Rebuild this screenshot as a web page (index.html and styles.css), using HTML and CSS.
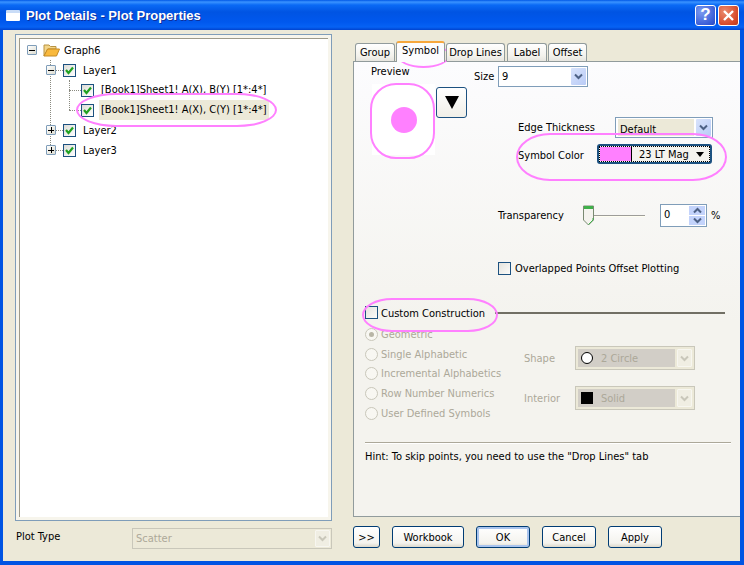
FILE: index.html
```html
<!DOCTYPE html>
<html lang="en">
<head>
    <meta charset="UTF-8">
    <title>Plot Details - Plot Properties</title>
    <link rel="stylesheet" href="styles.css">
</head>
<body>
    <svg class="defs" width="0" height="0">
        <symbol id="tick" viewBox="0 0 11 11">
            <path d="M2 5 L4.5 8 L9 2.5" fill="none" stroke="#21a121" stroke-width="2.2"/>
        </symbol>
        <symbol id="chevron" viewBox="0 0 9 7">
            <path d="M1 1.5 L4.5 5 L8 1.5" fill="none" stroke="currentColor" stroke-width="2"/>
        </symbol>
    </svg>

    <div class="window">
        <div class="titlebar">
            <span class="title-icon"></span>
            <span class="title-text">Plot Details - Plot Properties</span>
            <span class="caption-btn help-btn">?</span>
            <span class="caption-btn close-btn">
                <svg width="13" height="13" viewBox="0 0 13 13"><path d="M2 2 L11 11 M11 2 L2 11" stroke="#fff" stroke-width="2.4"/></svg>
            </span>
        </div>

        <div class="client">
            <div class="left-col">
                <div class="tree-frame">
                    <div class="tree">
                        <div class="row level0">
                            <span class="expander minus"></span>
                            <svg class="folder" width="17" height="14" viewBox="0 0 17 14">
                                <path d="M1 13 V2 H6 L7.5 3.5 H13 V6 H5 Z" fill="#f3d58a" stroke="#b89343"/>
                                <path d="M1 13 L4.5 6 H16.5 L13.5 13 Z" fill="#f9b93d" stroke="#c48a25"/>
                            </svg>
                            <span class="row-text">Graph6</span>
                        </div>
                        <div class="layer-group">
                            <div class="row level1">
                                <span class="expander minus"></span>
                                <span class="dots short"></span>
                                <span class="check"><svg width="11" height="11"><use href="#tick"/></svg></span>
                                <span class="row-text">Layer1</span>
                            </div>
                            <div class="plot-group">
                                <div class="row level2">
                                    <span class="dots long"></span>
                                    <span class="check"><svg width="11" height="11"><use href="#tick"/></svg></span>
                                    <span class="row-text">[Book1]Sheet1! A(X), B(Y) [1*:4*]</span>
                                </div>
                                <div class="row level2">
                                    <span class="dots long"></span>
                                    <span class="check"><svg width="11" height="11"><use href="#tick"/></svg></span>
                                    <span class="row-text selected">[Book1]Sheet1! A(X), C(Y) [1*:4*]</span>
                                </div>
                            </div>
                            <div class="row level1">
                                <span class="expander plus"></span>
                                <span class="dots short"></span>
                                <span class="check"><svg width="11" height="11"><use href="#tick"/></svg></span>
                                <span class="row-text">Layer2</span>
                            </div>
                            <div class="row level1">
                                <span class="expander plus"></span>
                                <span class="dots short"></span>
                                <span class="check"><svg width="11" height="11"><use href="#tick"/></svg></span>
                                <span class="row-text">Layer3</span>
                            </div>
                        </div>
                    </div>
                </div>
                <div class="plot-type">
                    <span class="plot-type-label">Plot Type</span>
                    <div class="combo disabled plot-type-combo">
                        <span class="combo-value">Scatter</span>
                        <span class="combo-btn"><svg width="9" height="7"><use href="#chevron"/></svg></span>
                    </div>
                </div>
            </div>

            <div class="right-col">
                <div class="tabs">
                    <span class="tab tab-group">Group</span>
                    <span class="tab tab-symbol active">Symbol</span>
                    <span class="tab tab-drop">Drop Lines</span>
                    <span class="tab tab-label">Label</span>
                    <span class="tab tab-offset">Offset</span>
                </div>

                <div class="panel">
                    <div class="top">
                        <div class="preview-col">
                            <div class="preview-label">Preview</div>
                            <div class="preview-row">
                                <div class="preview-box"><span class="preview-dot"></span></div>
                                <span class="symbol-btn"><span class="down-tri"></span></span>
                            </div>
                        </div>
                        <div class="props">
                            <div class="size-row">
                                <span class="size-label">Size</span>
                                <div class="combo size-combo">
                                    <span class="combo-value">9</span>
                                    <span class="combo-btn"><svg width="9" height="7"><use href="#chevron"/></svg></span>
                                </div>
                            </div>
                            <div class="edge-row">
                                <span class="edge-label">Edge Thickness</span>
                                <div class="combo edge-combo">
                                    <span class="combo-value">Default</span>
                                    <span class="combo-btn"><svg width="9" height="7"><use href="#chevron"/></svg></span>
                                </div>
                            </div>
                            <div class="color-row">
                                <span class="color-label">Symbol Color</span>
                                <div class="color-btn">
                                    <div class="color-focus">
                                        <span class="color-swatch"></span>
                                        <span class="color-name">23 LT Mag</span>
                                        <span class="small-tri"></span>
                                    </div>
                                </div>
                            </div>
                        </div>
                    </div>

                    <div class="transparency-row">
                        <span class="transparency-label">Transparency</span>
                        <div class="slider">
                            <svg class="slider-thumb" width="11" height="21" viewBox="0 0 11 21">
                                <path d="M0.5 1 H10.5 V15 L5.5 20 L0.5 15 Z" fill="#f4f3ee" stroke="#7a8a72"/>
                                <path d="M1 1 H10 V4 H1 Z" fill="#3fb04a"/>
                                <path d="M5.5 19.5 L10 15 V13" fill="none" stroke="#3fb04a"/>
                            </svg>
                        </div>
                        <div class="spin">
                            <span class="spin-value">0</span>
                            <div class="spin-btns">
                                <span class="spin-btn"><svg width="9" height="7"><use class="flip" href="#chevron"/></svg></span>
                                <span class="spin-btn"><svg width="9" height="7"><use href="#chevron"/></svg></span>
                            </div>
                        </div>
                        <span class="percent">%</span>
                    </div>

                    <div class="overlap-row">
                        <span class="check empty"></span>
                        <span>Overlapped Points Offset Plotting</span>
                    </div>

                    <div class="custom-row">
                        <span class="check empty"></span>
                        <span class="custom-label">Custom Construction</span>
                        <span class="custom-line"></span>
                    </div>

                    <div class="options">
                        <div class="radios">
                            <div class="radio-row"><span class="radio on"></span>Geometric</div>
                            <div class="radio-row"><span class="radio"></span>Single Alphabetic</div>
                            <div class="radio-row"><span class="radio"></span>Incremental Alphabetics</div>
                            <div class="radio-row"><span class="radio"></span>Row Number Numerics</div>
                            <div class="radio-row"><span class="radio"></span>User Defined Symbols</div>
                        </div>
                        <div class="shape-col">
                            <div class="shape-row">
                                <span class="shape-label">Shape</span>
                                <div class="combo disabled shape-combo">
                                    <span class="combo-value">
                                        <span class="mini-circle"></span>2 Circle
                                    </span>
                                    <span class="combo-btn"><svg width="9" height="7"><use href="#chevron"/></svg></span>
                                </div>
                            </div>
                            <div class="shape-row">
                                <span class="shape-label">Interior</span>
                                <div class="combo disabled shape-combo">
                                    <span class="combo-value">
                                        <span class="mini-square"></span>Solid
                                    </span>
                                    <span class="combo-btn"><svg width="9" height="7"><use href="#chevron"/></svg></span>
                                </div>
                            </div>
                        </div>
                    </div>

                    <div class="separator"></div>
                    <div class="hint">Hint: To skip points, you need to use the "Drop Lines" tab</div>
                </div>

                <div class="buttons">
                    <span class="btn btn-more">&gt;&gt;</span>
                    <span class="btn btn-book">Workbook</span>
                    <span class="btn btn-std default">OK</span>
                    <span class="btn btn-std">Cancel</span>
                    <span class="btn btn-std">Apply</span>
                </div>
            </div>
        </div>

        <!-- hand drawn highlight ovals on top of the dialog -->
        <div class="oval oval-tree"></div>
        <div class="oval oval-tab"></div>
        <div class="oval oval-preview"></div>
        <div class="oval oval-color"></div>
        <div class="oval oval-custom"></div>
    </div>
</body>
</html>
```

FILE: styles.css
```css
html, body {
    margin: 0;
    padding: 0;
}
body {
    font-family: "DejaVu Sans Condensed", "DejaVu Sans", sans-serif;
    font-stretch: condensed;
    font-size: 11px;
    color: #000;
    background: #ece9d8;
}
.defs { position: absolute; }

.window {
    position: relative;
    width: 744px;
    height: 565px;
    display: flex;
    flex-direction: column;
    overflow: hidden;
}

/* title bar */
.titlebar {
    height: 30px;
    flex: none;
    display: flex;
    align-items: center;
    padding: 0 5px 0 6px;
    box-sizing: border-box;
    background: linear-gradient(#0058e6 0, #3a93ff 2px, #0a6af5 5px, #0054e3 12px, #0058ee 22px, #0662f4 27px, #0043cf 30px);
}
.title-icon {
    width: 14px;
    height: 8px;
    margin-right: 6px;
    background: #fff;
    border-top: 3px solid #c9dcf7;
    border-radius: 1px;
}
.title-text {
    flex: 1;
    color: #fff;
    font-family: "Liberation Sans", Arial, sans-serif;
    font-stretch: normal;
    font-weight: bold;
    font-size: 13px;
    text-shadow: 1px 1px 0 #0f2f9a;
}
.caption-btn {
    width: 19px;
    height: 19px;
    border: 1px solid #fff;
    border-radius: 3px;
    display: flex;
    align-items: center;
    justify-content: center;
    color: #fff;
    font-family: "Liberation Sans", Arial, sans-serif;
    font-weight: bold;
    font-size: 17px;
}
.help-btn {
    background: radial-gradient(circle at 30% 30%, #7d9bf0, #3b5fd8 70%, #2a48c0);
    margin-right: 2px;
}
.close-btn {
    background: radial-gradient(circle at 30% 30%, #ea8a6e, #d6492a 70%, #b93a1c);
}

/* dialog body */
.client {
    flex: 1;
    display: flex;
    background: #ece9d8;
    border-style: solid;
    border-color: #0054e3;
    border-width: 0 4px 4px 3px;
    min-height: 0;
}
.left-col {
    width: 350px;
    flex: none;
    box-sizing: border-box;
    padding: 4px 21px 0 12px;
}
.right-col {
    flex: 1;
    min-width: 0;
    padding-top: 12px;
}

/* tree */
.tree-frame {
    height: 487px;
    box-sizing: border-box;
    border: 1px solid #7f9db9;
    padding: 3px;
    background: #f7f5ec;
}
.tree {
    height: 100%;
    box-sizing: border-box;
    padding-top: 1px;
    background: #fff;
    border-top: 1px solid #9d9a8a;
    border-left: 1px solid #9d9a8a;
}
.row {
    height: 20px;
    display: flex;
    align-items: center;
    white-space: nowrap;
}
.level0 { padding-left: 7px; }
.level1 { padding-left: 26px; }
.level2 { padding-left: 49px; }
.layer-group, .plot-group { position: relative; }
.layer-group::before {
    content: "";
    position: absolute;
    left: 30px;
    top: 0;
    height: 85px;
    border-left: 1px dotted #8a8a80;
}
.plot-group::before {
    content: "";
    position: absolute;
    left: 49px;
    top: 0;
    height: 30px;
    border-left: 1px dotted #8a8a80;
}
.expander {
    position: relative;
    z-index: 1;
    width: 8px;
    height: 8px;
    flex: none;
    border: 1px solid #7f9db9;
    border-radius: 1px;
    background:
        linear-gradient(#000, #000) center / 6px 1px no-repeat,
        linear-gradient(135deg, #fff, #dcdcd0);
}
.expander.plus {
    background:
        linear-gradient(#000, #000) center / 6px 1px no-repeat,
        linear-gradient(#000, #000) center / 1px 6px no-repeat,
        linear-gradient(135deg, #fff, #dcdcd0);
}
.folder { margin: 0 4px 0 6px; flex: none; }
.dots {
    flex: none;
    height: 0;
    border-top: 1px dotted #8a8a80;
}
.dots.short { width: 7px; }
.dots.long { width: 12px; }
.check {
    width: 11px;
    height: 11px;
    flex: none;
    border: 1px solid #1c5180;
    background: linear-gradient(135deg, #dcdcd7, #fff);
    display: inline-block;
    line-height: 0;
}
.check.empty {
    background: linear-gradient(135deg, #e4e3dd, #fbfbf9);
}
.level1 .row-text { margin-left: 7px; }
.level2 .row-text { margin-left: 5px; padding: 0 2px; line-height: 20px; }
.row-text.selected { background: #ece9d8; }

/* plot type */
.plot-type {
    margin-top: 7px;
    display: flex;
    align-items: center;
    height: 21px;
}
.plot-type-label { width: 116px; padding-left: 1px; margin-top: -5px; }
.plot-type-combo { width: 200px; }

/* combos */
.combo {
    display: flex;
    align-items: center;
    height: 21px;
    box-sizing: border-box;
    border: 1px solid #7f9db9;
    background: #fff;
    padding: 1px;
}
.combo-value {
    flex: 1;
    align-self: stretch;
    display: flex;
    align-items: center;
    padding-left: 2px;
    min-width: 0;
}
.combo-btn {
    width: 15px;
    flex: none;
    align-self: stretch;
    display: flex;
    align-items: center;
    justify-content: center;
    color: #4d6185;
    background: linear-gradient(135deg, #d8e3fc, #b9cbf6);
    border-radius: 1px;
    margin-left: 2px;
}
.combo.disabled {
    border-color: #c9c7ba;
    background: #ece9d8;
    color: #aca899;
}
.combo.disabled .combo-btn {
    color: #c9c7ba;
    background: #f0eee3;
    border: 1px solid #f7f6f0;
    box-sizing: border-box;
}

/* tabs */
.tabs {
    display: flex;
    align-items: flex-end;
    height: 19px;
    padding: 0 0 0 2px;
    position: relative;
    z-index: 1;
}
.tab {
    height: 18px;
    box-sizing: border-box;
    border: 1px solid #919b9c;
    border-bottom: none;
    border-radius: 3px 3px 0 0;
    background: linear-gradient(#fff, #f3f2ec 70%, #e6e5df);
    display: flex;
    align-items: center;
    justify-content: center;
}
.tab-group { width: 40px; margin-right: 1px; }
.tab-symbol { width: 49px; margin-right: 1px; }
.tab-drop { width: 59px; margin-right: 2px; }
.tab-label { width: 40px; margin-right: 1px; }
.tab-offset { width: 39px; }
.tab.active {
    height: 21px;
    margin-bottom: -1px;
    background: #fcfcfe;
    border-top: 2px solid #f6a73c;
    padding-bottom: 4px;
}

/* tab panel */
.panel {
    height: 456px;
    box-sizing: border-box;
    border: 1px solid #919b9c;
    border-right: none;
    background: linear-gradient(#fcfcfe, #f4f3ee 260px);
}
.top {
    display: flex;
    height: 142px;
}
.preview-col {
    width: 120px;
    flex: none;
    box-sizing: border-box;
    padding: 2px 0 0 17px;
}
.preview-label { height: 16px; line-height: 16px; }
.preview-row { display: flex; margin-top: 4px; }
.preview-box {
    width: 63px;
    height: 71px;
    margin-left: 1px;
    background: #fff;
    display: flex;
    align-items: center;
    justify-content: center;
}
.preview-dot {
    width: 26px;
    height: 26px;
    border-radius: 50%;
    background: #ff80ff;
}
.symbol-btn {
    width: 31px;
    height: 31px;
    box-sizing: border-box;
    margin: 3px 0 0 1px;
    border: 1px solid #1c5180;
    border-radius: 3px;
    background: linear-gradient(#fff, #f0efe8);
    display: flex;
    align-items: center;
    justify-content: center;
}
.down-tri {
    border-left: 7px solid transparent;
    border-right: 7px solid transparent;
    border-top: 13px solid #000;
}
.props { padding-top: 4px; }
.size-row { display: flex; align-items: center; }
.size-label { width: 24px; }
.size-combo { width: 90px; }
.edge-row {
    display: flex;
    align-items: center;
    margin-top: 30px;
    padding-left: 44px;
}
.edge-label { width: 97px; }
.edge-combo { width: 98px; }
.edge-combo .combo-value { background: #ece9d8; margin-left: 1px; padding-top: 3px; }
.color-row {
    display: flex;
    margin-top: 6px;
    padding-left: 44px;
}
.color-label { width: 79px; padding-top: 5px; }
.color-btn {
    width: 115px;
    height: 20px;
    box-sizing: border-box;
    border: 2px solid #1c5180;
    border-radius: 3px;
    background: #f4f3ee;
}
.color-focus {
    display: flex;
    align-items: center;
    height: 100%;
    box-sizing: border-box;
    border: 1px dotted #000;
}
.color-swatch {
    width: 31px;
    align-self: stretch;
    background: #ff80ff;
    border-right: 1px solid #000;
}
.color-name { flex: 1; padding-left: 7px; }
.small-tri {
    margin-right: 5px;
    border-left: 4px solid transparent;
    border-right: 4px solid transparent;
    border-top: 5px solid #000;
}

.transparency-row {
    display: flex;
    align-items: center;
    height: 23px;
    padding-left: 144px;
}
.transparency-label { width: 85px; }
.slider {
    width: 62px;
    height: 21px;
    margin-right: 15px;
    display: flex;
    align-items: center;
    background: linear-gradient(#9d9c99, #9d9c99) right 10px / 52px 1px no-repeat,
                linear-gradient(#fffef0, #fffef0) right 11px / 52px 1px no-repeat;
}
.spin {
    width: 47px;
    height: 23px;
    box-sizing: border-box;
    border: 1px solid #7f9db9;
    background: #fff;
    display: flex;
    padding: 1px;
}
.spin-value { flex: 1; padding: 2px 0 0 2px; }
.spin-btns { width: 16px; display: flex; flex-direction: column; gap: 1px; }
.spin-btn {
    flex: 1;
    display: flex;
    align-items: center;
    justify-content: center;
    color: #4d6185;
    background: #c3d3fb;
    overflow: hidden;
}
.flip { transform: rotate(180deg); transform-origin: 4.5px 3.5px; }
.percent { margin-left: 4px; }

.overlap-row {
    display: flex;
    align-items: center;
    gap: 4px;
    height: 13px;
    margin-top: 35px;
    padding-left: 144px;
}
.custom-row {
    display: flex;
    align-items: center;
    height: 13px;
    margin-top: 31px;
    padding-left: 11px;
}
.custom-label { width: 117px; padding: 1px 0 0 3px; box-sizing: border-box; flex: none; }
.custom-row .custom-line {
    width: 230px;
    height: 2px;
    background: #716f64;
}

.options {
    display: flex;
    margin-top: 5px;
    padding-left: 11px;
    color: #aca899;
}
.radios { width: 159px; flex: none; }
.radio-row {
    height: 20px;
    display: flex;
    align-items: center;
    gap: 3px;
}
.radio-row:nth-child(3) { height: 19px; }
.radio-row:nth-child(5) { height: 21px; }
.radio {
    width: 11px;
    height: 11px;
    flex: none;
    border: 1px solid #c9c7ba;
    border-radius: 50%;
    background: #f8f7f2;
    display: flex;
    align-items: center;
    justify-content: center;
}
.radio.on::after {
    content: "";
    width: 5px;
    height: 5px;
    border-radius: 50%;
    background: #b8b5a6;
}
.shape-col {
    padding-top: 22px;
    display: flex;
    flex-direction: column;
    gap: 16px;
}
.shape-row { display: flex; align-items: center; }
.shape-label { width: 51px; }
.shape-combo { width: 120px; height: 24px; padding: 2px; }
.shape-combo .combo-value { background: #d2cec7; padding-left: 3px; }
.mini-circle {
    width: 10px;
    height: 10px;
    margin-right: 8px;
    border: 1px solid #000;
    border-radius: 50%;
    background: #fff;
}
.mini-square {
    width: 12px;
    height: 12px;
    margin-right: 8px;
    background: #000;
}
.separator {
    margin: 18px 9px 0 11px;
    height: 1px;
    background: #aca899;
    box-shadow: 0 1px 0 #fff;
}
.hint {
    margin-top: 7px;
    padding-left: 11px;
    line-height: 14px;
}

/* bottom buttons */
.buttons {
    display: flex;
    gap: 12px;
    margin-top: 9px;
}
.btn {
    height: 22px;
    box-sizing: border-box;
    border: 1px solid #003c74;
    border-radius: 3px;
    background: linear-gradient(#fff, #f4f3ee 80%, #dcd8cb);
    display: flex;
    align-items: center;
    justify-content: center;
}
.btn-more { width: 27px; }
.btn-book { width: 72px; }
.btn-std { width: 54px; }
.btn.default { box-shadow: inset 0 0 0 2px #a9c4ee; }

/* pink ovals */
.oval {
    position: absolute;
    box-sizing: border-box;
    border: 2px solid #ff80ff;
    pointer-events: none;
}
.oval-tree { left: 76px; top: 93px; width: 201px; height: 34px; border-radius: 40px / 17px; }
.oval-tab { left: 397px; top: 43px; width: 53px; height: 25px; border-radius: 50%; }
.oval-preview { left: 370px; top: 83px; width: 65px; height: 76px; border-radius: 26px; }
.oval-color { left: 516px; top: 133px; width: 211px; height: 48px; border-radius: 34px / 24px; }
.oval-custom { left: 362px; top: 298px; width: 136px; height: 34px; border-radius: 30px / 17px; }
```
